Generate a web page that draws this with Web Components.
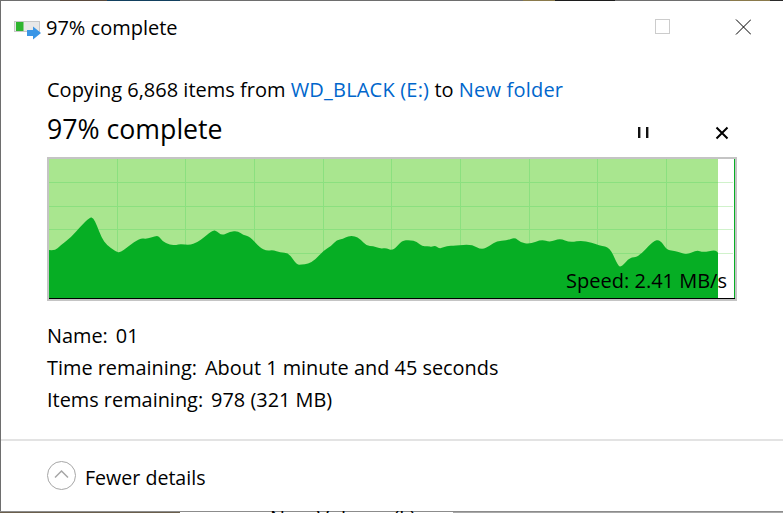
<!DOCTYPE html>
<html>
<head>
<meta charset="utf-8">
<title>97% complete</title>
<style>
  html, body { margin: 0; height: 100%; overflow: hidden; }
  body { font-family: "Open Sans", "Noto Sans", sans-serif; color: #000; }
</style>
</head>
<body>
<copy-desktop>
  <copy-dialog>
    <copy-titlebar slot="title">97% complete</copy-titlebar>
    <copy-summary from="WD_BLACK (E:)" to="New folder" items="6,868"></copy-summary>
    <copy-heading>97% complete</copy-heading>
    <speed-chart speed="2.41 MB/s"></speed-chart>
    <copy-details></copy-details>
    <details-toggle>Fewer details</details-toggle>
  </copy-dialog>
</copy-desktop>

<script>
class CopyDesktop extends HTMLElement {
  constructor() {
    super();
    this.attachShadow({ mode: 'open' });
    this.shadowRoot.innerHTML = `
      <style>
        :host {
          display: block;
          width: 783px;
          height: 513px;
          overflow: hidden;
          background: linear-gradient(90deg, #6e6e6e 0 60px, #5a4a3c 60px 107px, #12405f 107px 180px, #6e6e6e 180px 523px, #8a7a4c 523px 555px, #1c1c1c 555px 615px, #6e6e6e 615px 730px, #8a7a4c 730px 770px, #2a2a2a 770px);
        }
        .win { display: block; height: 510px; margin: 1px 0 0 1px; }
        .peek {
          height: 2px;
          overflow: hidden;
          background:
            linear-gradient(#8c8c8c 0 1px, transparent 1px) 0 0 no-repeat,
            linear-gradient(90deg, #6b5f4c 0 180px, #fff 180px 453px, #a8a8a8 453px);
          padding-left: 270px;
          font-size: 20px;
          line-height: 20px;
          white-space: nowrap;
        }
        .peek span { display: block; margin-top: -3px; }
      </style>
      <div class="win"><slot></slot></div>
      <div class="peek"><span>New Volume (I:)</span></div>
    `;
  }
}

class CopyDialog extends HTMLElement {
  constructor() {
    super();
    this.attachShadow({ mode: 'open' });
    this.shadowRoot.innerHTML = `
      <style>
        :host {
          display: flex;
          flex-direction: column;
          height: 510px;
          background: #fff;
        }
      </style>
      <slot name="title"></slot>
      <slot></slot>
    `;
  }
}

class CopyTitlebar extends HTMLElement {
  constructor() {
    super();
    this.attachShadow({ mode: 'open' });
    this.shadowRoot.innerHTML = `
      <style>
        :host {
          display: flex;
          align-items: center;
          height: 52px;
          padding-left: 12px;
          font-size: 20px;
        }
        .text { flex: 1; }
        .btn { width: 16px; height: 16px; display: block; }
        .max { margin-right: 65px; }
        .close { margin-right: 32px; }
      </style>
      <svg width="33" height="26" viewBox="0 0 33 26">
        <rect x="1.5" y="7.5" width="25" height="10" fill="#e8e8e8" stroke="#c8c8c8"/>
        <rect x="3" y="8" width="7.5" height="9" fill="#2fb52f"/>
        <path d="M14 16h6v-3.5l8 6.5-8 6.5V22h-6z" fill="#3a96e6"/>
      </svg>
      <span class="text"><slot></slot></span>
      <svg class="btn max" viewBox="0 0 16 16"><rect x="1.5" y=".5" width="14" height="14" fill="none" stroke="#ccc"/></svg>
      <svg class="btn close" viewBox="0 0 16 16"><path d="M1 .5l15 15M16 .5l-15 15" stroke="#000" fill="none"/></svg>
    `;
  }
}

class CopySummary extends HTMLElement {
  constructor() {
    super();
    this.attachShadow({ mode: 'open' });
    const items = this.getAttribute('items');
    const from = this.getAttribute('from');
    const to = this.getAttribute('to');
    this.shadowRoot.innerHTML = `
      <style>
        :host { display: block; margin: 24px 0 0 46px; font-size: 20px; line-height: 26px; white-space: nowrap; }
        a { color: #0066cc; text-decoration: none; letter-spacing: .2px; }
      </style>
      Copying ${items} items from <a>${from}</a> to <a>${to}</a>
    `;
  }
}

class CopyHeading extends HTMLElement {
  constructor() {
    super();
    this.attachShadow({ mode: 'open' });
    this.shadowRoot.innerHTML = `
      <style>
        :host {
          display: flex;
          align-items: center;
          margin: 7px 0 0 46px;
          height: 36px;
          font-size: 26.7px;
        }
        .text { flex: 1; }
        svg { margin-top: 9px; }
        .pause { margin-right: 65px; }
        .stop { margin-right: 54px; }
      </style>
      <span class="text"><slot></slot></span>
      <svg class="pause" width="14" height="14" viewBox="0 0 14 14"><path d="M2 1v11h2.4V1zM10 1v11h2.4V1z" fill="#111"/></svg>
      <svg class="stop" width="14" height="14" viewBox="0 0 14 14"><path d="M1.5 1.5l11 11M12.5 1.5l-11 11" stroke="#000" stroke-width="2" fill="none"/></svg>
    `;
  }
}

class SpeedChart extends HTMLElement {
  constructor() {
    super();
    this.attachShadow({ mode: 'open' });
    const speed = this.getAttribute('speed');
    // points read off the reference, in page coordinates
    const pts = [[49,250],[55,250.7],[60,246],[71.7,236.7],[80,227],[90,217],[93.3,218],[96.7,225],[101.7,238],[106.7,245],[115,251],[120,253],[128,246.7],[140,238],[147,239],[155,236],[159,236],[162,241],[170,245],[176.7,245],[180,244],[190,245],[196.7,242.7],[205,236.7],[213,230],[216.7,231],[221.7,235.7],[230,231.7],[238,231],[243,235],[250,236.7],[260,247.7],[266.7,251],[273,250],[280,252.7],[289,253],[296.7,265],[301.7,264.3],[308,264],[315,260],[323,251],[331.7,245.7],[336.7,240],[343,239],[348,236],[355,236],[360,239],[366.7,246],[373,246],[380,248.7],[386.7,248],[390,250],[395,249],[401.7,240.7],[410,240],[416.7,241.7],[422.7,246.7],[428,246],[431.7,247],[435,245.3],[440,249],[446.7,245.7],[455,245.7],[471.7,244.3],[481.7,250],[490,245.7],[496.7,241],[506.7,240.7],[515,237.3],[520,242.3],[530,244],[541.7,239.3],[550,242.3],[560,238.3],[570,242.7],[583,240],[600,245.7],[610,247.3],[618.3,266.5],[621.7,266.5],[630,257.3],[638,257.3],[653.3,241],[660,239.5],[666.7,250],[673,250.7],[678,251.7],[686.7,255],[696.7,250],[703,252.3],[715,250],[718,252.7]];
    const ox = 49, oy = 159;
    const local = pts.map(p => [p[0] - ox, p[1] - oy]);
    // soften the corners: each reading is a control point, midpoints are on the curve
    let d = `M0 140L${local[0][0]} ${local[0][1]}`;
    for (let i = 1; i < local.length - 1; i++) {
      const mx = (local[i][0] + local[i + 1][0]) / 2;
      const my = (local[i][1] + local[i + 1][1]) / 2;
      d += `Q${local[i][0]} ${local[i][1]} ${mx.toFixed(1)} ${my.toFixed(1)}`;
    }
    d += `L669 ${local[local.length - 1][1]}L669 140Z`;
    const vs = [117,185,254,323,391,460,529,597,666].map(x => `<path d="M${x - ox + .5} 0V139" stroke="#8be07f"/>`).join('');
    const hs = [182,206,229,253].map(y => `<path d="M0 ${y - oy + .5}H669" stroke="#8be07f"/><path d="M669 ${y - oy + .5}H684" stroke="#d0f2cb"/>`).join('');
    this.shadowRoot.innerHTML = `
      <style>
        :host {
          display: block;
          position: relative;
          box-sizing: border-box;
          width: 690px;
          height: 144px;
          margin: 11px 0 0 46px;
          border: 2px solid #c4c4c4;
          background: #fff;
        }
        svg { display: block; }
        .speed {
          position: absolute;
          right: 8px;
          bottom: 6px;
          font-size: 20px;
          line-height: 24px;
          white-space: nowrap;
        }
      </style>
      <svg width="686" height="140" viewBox="0 0 686 140">
        <rect width="669" height="140" fill="#a9e68f"/>
        ${hs}${vs}
        <path d="${d}" fill="#06ae24"/>
        <rect x="685" width="1" height="140" fill="#06ae24"/>
        <rect y="139" width="686" height="1" fill="#000"/>
      </svg>
      <span class="speed">Speed: ${speed}</span>
    `;
  }
}

class CopyDetails extends HTMLElement {
  constructor() {
    super();
    this.attachShadow({ mode: 'open' });
    const rows = [['Name:', '01'], ['Time remaining:', 'About 1 minute and 45 seconds'], ['Items remaining:', '978 (321 MB)']];
    this.shadowRoot.innerHTML = `
      <style>
        :host { display: block; margin: 19px 0 0 46px; font-size: 19.9px; line-height: 32px; }
        .row { display: flex; gap: 8px; }
      </style>
      ${rows.map(r => `<div class="row"><span>${r[0]}</span><span>${r[1]}</span></div>`).join('')}
    `;
  }
}

class DetailsToggle extends HTMLElement {
  constructor() {
    super();
    this.attachShadow({ mode: 'open' });
    this.shadowRoot.innerHTML = `
      <style>
        :host {
          display: flex;
          align-items: center;
          gap: 9px;
          height: 69px;
          margin-top: 23px;
          padding-left: 46px;
          border-top: 2px solid #e3e3e3;
          font-size: 19.6px;
        }
        span { margin-top: 4px; }
      </style>
      <svg width="29" height="29" viewBox="0 0 29 29">
        <circle cx="14.5" cy="14.5" r="14" fill="#fff" stroke="#a6a6a6"/>
        <path d="M8 16.5l6.5-6.5 6.5 6.5" fill="none" stroke="#a6a6a6" stroke-width="1.5"/>
      </svg>
      <span><slot></slot></span>
    `;
  }
}

customElements.define('copy-desktop', CopyDesktop);
customElements.define('copy-dialog', CopyDialog);
customElements.define('copy-titlebar', CopyTitlebar);
customElements.define('copy-summary', CopySummary);
customElements.define('copy-heading', CopyHeading);
customElements.define('speed-chart', SpeedChart);
customElements.define('copy-details', CopyDetails);
customElements.define('details-toggle', DetailsToggle);
</script>
</body>
</html>
